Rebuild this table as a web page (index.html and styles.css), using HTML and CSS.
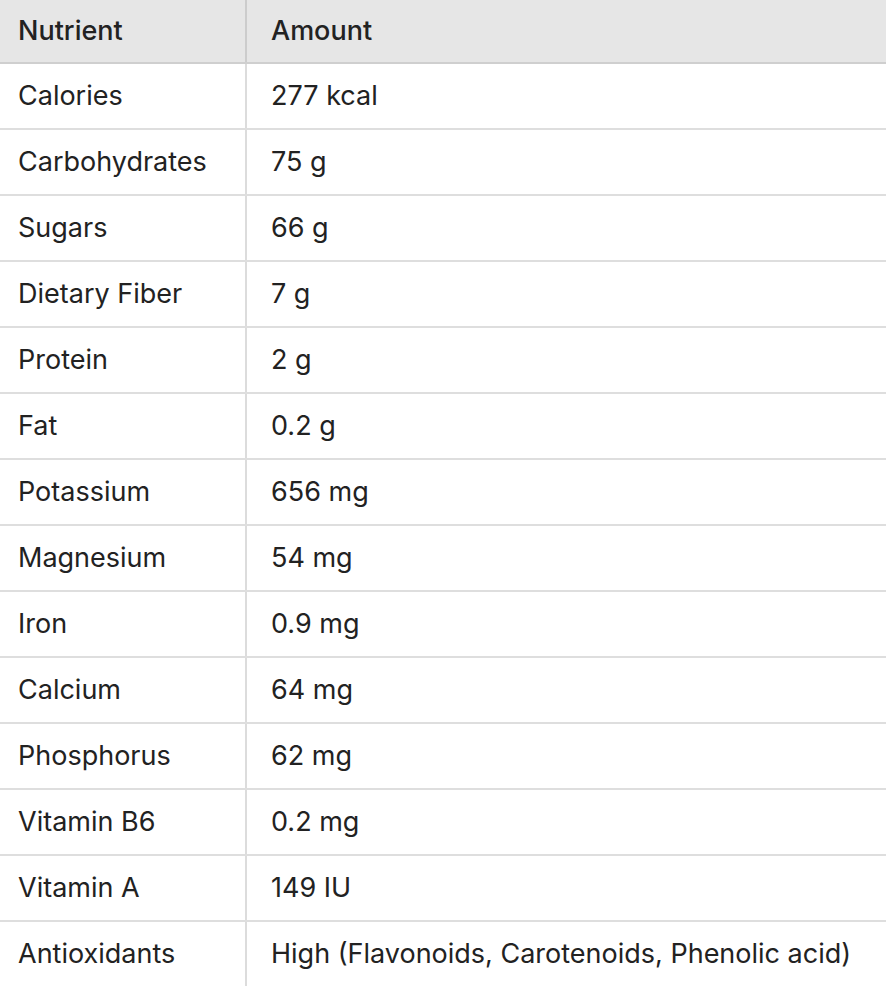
FILE: index.html
```html
<!DOCTYPE html>
<html lang="en">
<head>
<meta charset="utf-8">
<title>Nutrition</title>
<link rel="stylesheet" href="styles.css">
</head>
<body>
<table class="nutri">
  <thead>
    <tr><th class="c1">Nutrient</th><th class="c2">Amount</th></tr>
  </thead>
  <tbody>
    <tr><td class="c1">Calories</td><td class="c2">277 kcal</td></tr>
    <tr><td class="c1">Carbohydrates</td><td class="c2">75 g</td></tr>
    <tr><td class="c1">Sugars</td><td class="c2">66 g</td></tr>
    <tr><td class="c1">Dietary Fiber</td><td class="c2">7 g</td></tr>
    <tr><td class="c1">Protein</td><td class="c2">2 g</td></tr>
    <tr><td class="c1">Fat</td><td class="c2">0.2 g</td></tr>
    <tr><td class="c1">Potassium</td><td class="c2">656 mg</td></tr>
    <tr><td class="c1">Magnesium</td><td class="c2">54 mg</td></tr>
    <tr><td class="c1">Iron</td><td class="c2">0.9 mg</td></tr>
    <tr><td class="c1">Calcium</td><td class="c2">64 mg</td></tr>
    <tr><td class="c1">Phosphorus</td><td class="c2">62 mg</td></tr>
    <tr><td class="c1">Vitamin B6</td><td class="c2">0.2 mg</td></tr>
    <tr><td class="c1">Vitamin A</td><td class="c2">149 IU</td></tr>
    <tr><td class="c1">Antioxidants</td><td class="c2">High (Flavonoids, Carotenoids, Phenolic acid)</td></tr>
  </tbody>
</table>
</body>
</html>
```
FILE: styles.css
```css
html, body {
  margin: 0;
  padding: 0;
  background: #ffffff;
}
.nutri {
  width: 100%;
  border-collapse: collapse;
  font-family: Inter, "Noto Sans", sans-serif;
  font-size: 27px;
  color: #222222;
}
.nutri th,
.nutri td {
  text-align: left;
  vertical-align: middle;
  padding: 0 0 2px 0;
  white-space: nowrap;
  box-sizing: border-box;
}
.nutri th {
  height: 63px;
  background: #e6e6e6;
  font-weight: 500;
  border-bottom: 2px solid #cfcfcf;
}
.nutri td {
  height: 66px;
  font-weight: 400;
  border-bottom: 2px solid #dedede;
}
.nutri tbody tr:last-child td {
  border-bottom: none;
}
.nutri .c1 {
  width: 246px;
  padding-left: 18px;
  border-right: 2px solid #dcdcdc;
}
.nutri th.c1 {
  border-right-color: #cccccc;
}
.nutri .c2 {
  padding-left: 24px;
}
```
